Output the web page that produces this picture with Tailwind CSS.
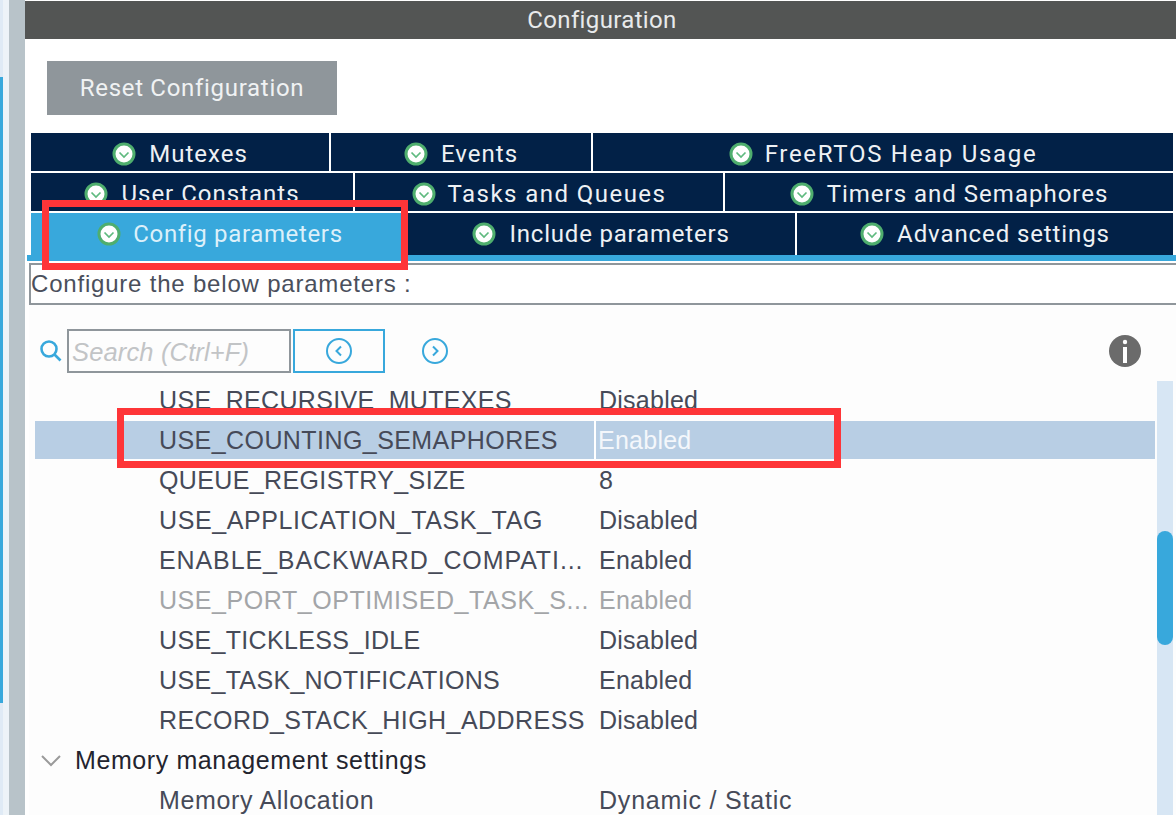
<!DOCTYPE html>
<html lang="en">
<head>
  <meta charset="UTF-8">
  <title>Configuration</title>
  <script src="https://cdn.jsdelivr.net/npm/@tailwindcss/browser@4"></script>
</head>
<body class="bg-white w-[1176px] h-[815px] overflow-hidden relative font-['Liberation_Sans',sans-serif]">
  <div class="flex h-[815px]">
    <!-- left edge of the window behind the panel -->
    <div class="w-[3px] flex flex-col bg-[#dfeaf5]">
      <div class="h-[77px]"></div>
      <div class="h-[626px] bg-[#38a8dc]"></div>
    </div>
    <div class="w-[6px] bg-[#edf3f8]"></div>
    <div class="w-4 bg-[#b8c3c9]"></div>

    <main class="w-[1151px] flex flex-col">
      <div class="mt-px h-[38px] bg-[#535554] flex items-center justify-center text-[24px] tracking-[0.35px] text-[#e8eaeb] font-['Roboto',sans-serif]"><span class="ml-[3px]">Configuration</span></div>
      <div class="ml-[22px] mt-[22px] w-[290px] h-[54px] bg-[#8f969b] flex items-center justify-center text-[24px] tracking-[0.7px] text-[#f0f2f3] font-['Roboto',sans-serif]">Reset Configuration</div>

      <!-- tabs -->
      <div class="ml-[6px] mt-[18px] w-[1142px] flex flex-col gap-[2px] text-[24px] tracking-[1px] text-[#eef1f4] font-['Roboto',sans-serif]">
        <div class="flex gap-[2px] h-[38px]">
          <div class="w-[298px] pt-[3px] bg-[#022147] flex items-center justify-center gap-[13px]"><svg class="w-6 h-6" viewBox="0 0 24 24"><circle cx="12" cy="12" r="10" fill="#fff" stroke="#4fae6e" stroke-width="3"/><path d="M7.5 10.5l4.5 4.5 4.5-4.5" fill="none" stroke="#5fba7f" stroke-width="1.7"/></svg>Mutexes</div>
          <div class="w-[260px] pt-[3px] bg-[#022147] flex items-center justify-center gap-[13px]"><svg class="w-6 h-6" viewBox="0 0 24 24"><circle cx="12" cy="12" r="10" fill="#fff" stroke="#4fae6e" stroke-width="3"/><path d="M7.5 10.5l4.5 4.5 4.5-4.5" fill="none" stroke="#5fba7f" stroke-width="1.7"/></svg>Events</div>
          <div class="w-[580px] pt-[3px] bg-[#022147] flex items-center justify-center gap-[12px] tracking-[1.7px]"><svg class="w-6 h-6" viewBox="0 0 24 24"><circle cx="12" cy="12" r="10" fill="#fff" stroke="#4fae6e" stroke-width="3"/><path d="M7.5 10.5l4.5 4.5 4.5-4.5" fill="none" stroke="#5fba7f" stroke-width="1.7"/></svg>FreeRTOS Heap Usage</div>
        </div>
        <div class="flex gap-[2px] h-[38px]">
          <div class="w-[322px] pt-[3px] bg-[#022147] flex items-center justify-center gap-[13px]"><svg class="w-6 h-6" viewBox="0 0 24 24"><circle cx="12" cy="12" r="10" fill="#fff" stroke="#4fae6e" stroke-width="3"/><path d="M7.5 10.5l4.5 4.5 4.5-4.5" fill="none" stroke="#5fba7f" stroke-width="1.7"/></svg>User Constants</div>
          <div class="w-[368px] pt-[3px] bg-[#022147] flex items-center justify-center gap-[12px] tracking-[1.45px]"><svg class="w-6 h-6" viewBox="0 0 24 24"><circle cx="12" cy="12" r="10" fill="#fff" stroke="#4fae6e" stroke-width="3"/><path d="M7.5 10.5l4.5 4.5 4.5-4.5" fill="none" stroke="#5fba7f" stroke-width="1.7"/></svg>Tasks and Queues</div>
          <div class="w-[448px] pt-[3px] bg-[#022147] flex items-center justify-center gap-[13px]"><svg class="w-6 h-6" viewBox="0 0 24 24"><circle cx="12" cy="12" r="10" fill="#fff" stroke="#4fae6e" stroke-width="3"/><path d="M7.5 10.5l4.5 4.5 4.5-4.5" fill="none" stroke="#5fba7f" stroke-width="1.7"/></svg>Timers and Semaphores</div>
        </div>
        <div class="flex h-[42px]">
          <div class="w-[374px] h-[48px] bg-[#38a8dc] flex items-center justify-center gap-[12px] pb-[6px] pl-[4px] tracking-[0.65px] text-[#dcf0fa] relative"><svg class="w-6 h-6" viewBox="0 0 24 24"><circle cx="12" cy="12" r="10" fill="#fff" stroke="#4fae6e" stroke-width="3"/><path d="M7.5 10.5l4.5 4.5 4.5-4.5" fill="none" stroke="#5fba7f" stroke-width="1.7"/></svg>Config parameters</div>
          <div class="w-[390px] pl-[2px] bg-[#022147] flex items-center justify-center gap-[13px] tracking-[0.8px]"><svg class="w-6 h-6" viewBox="0 0 24 24"><circle cx="12" cy="12" r="10" fill="#fff" stroke="#4fae6e" stroke-width="3"/><path d="M7.5 10.5l4.5 4.5 4.5-4.5" fill="none" stroke="#5fba7f" stroke-width="1.7"/></svg>Include parameters</div>
          <div class="w-[376px] ml-[2px] bg-[#022147] flex items-center justify-center gap-[13px] tracking-[0.9px]"><svg class="w-6 h-6" viewBox="0 0 24 24"><circle cx="12" cy="12" r="10" fill="#fff" stroke="#4fae6e" stroke-width="3"/><path d="M7.5 10.5l4.5 4.5 4.5-4.5" fill="none" stroke="#5fba7f" stroke-width="1.7"/></svg>Advanced settings</div>
        </div>
      </div>
      <div class="ml-[2px] h-[6px] bg-[#38a8dc]"></div>

      <!-- panel below the tabs -->
      <div class="ml-[4px] mt-[2px] flex-1 bg-[#fdfdfd] flex flex-col min-h-0">
        <div class="h-[42px] border-y-2 border-l-2 border-[#8f969b] bg-white flex items-center text-[24px] tracking-[0.8px] text-[#4a4f5c]">Configure the below parameters :</div>

        <div class="h-[44px] mt-[24px] flex items-center relative">
          <svg class="ml-[10px] w-6 h-6" viewBox="0 0 24 24" fill="none" stroke="#38a8dc" stroke-width="2.6"><circle cx="10" cy="10" r="7.5"/><path d="M15.5 15.5l6 6"/></svg>
          <div class="ml-[4px] w-[224px] h-[44px] border-2 border-[#8f969b] flex items-center pl-[3px] pt-[3px] text-[25.5px] italic tracking-[0.15px] text-[#c2c4c6]">Search (Ctrl+F)</div>
          <div class="ml-[2px] w-[92px] h-[44px] border-2 border-[#38a8dc] flex items-center justify-center">
            <svg class="w-7 h-7" viewBox="0 0 28 28" fill="none" stroke="#38a8dc" stroke-width="2"><circle cx="14" cy="14" r="12"/><path d="M16 9.5L11.5 14l4.5 4.5"/></svg>
          </div>
          <svg class="ml-[36px] w-7 h-7" viewBox="0 0 28 28" fill="none" stroke="#38a8dc" stroke-width="2"><circle cx="14" cy="14" r="12"/><path d="M12 9.5l4.5 4.5-4.5 4.5"/></svg>
          <svg class="absolute left-[1080px] top-[6px] w-8 h-8" viewBox="0 0 32 32"><circle cx="16" cy="16" r="16" fill="#6b6b6b"/><circle cx="16" cy="7" r="2.2" fill="#fff"/><path d="M14 12h4v16h-4z" fill="#fff"/></svg>
        </div>

        <!-- parameter list and its scrollbar -->
        <div class="mt-[7px] flex-1 flex min-h-0 overflow-hidden text-[25px]">
          <div class="ml-[6px] w-[1120px] flex flex-col text-[#464a58] tracking-[0.25px]">
            <div class="h-10 pt-[2px] shrink-0 flex items-center"><span class="ml-[124px] w-[437px] whitespace-nowrap tracking-[0.33px]">USE_RECURSIVE_MUTEXES</span><span class="pl-[3px]">Disabled</span></div>
            <div class="h-[38px] shrink-0 my-px bg-[#b8cee4] flex items-center"><span class="ml-[124px] w-[437px] h-[38px] pt-[2px] flex items-center border-r-2 border-white whitespace-nowrap tracking-[0.43px]">USE_COUNTING_SEMAPHORES</span><span class="pl-[2px] pt-[2px] text-[#f4f7fb]">Enabled</span></div>
            <div class="h-10 pt-[2px] shrink-0 flex items-center"><span class="ml-[124px] w-[437px] whitespace-nowrap tracking-[0.37px]">QUEUE_REGISTRY_SIZE</span><span class="pl-[3px]">8</span></div>
            <div class="h-10 pt-[2px] shrink-0 flex items-center"><span class="ml-[124px] w-[437px] whitespace-nowrap tracking-[0.6px]">USE_APPLICATION_TASK_TAG</span><span class="pl-[3px]">Disabled</span></div>
            <div class="h-10 pt-[2px] shrink-0 flex items-center"><span class="ml-[124px] w-[437px] whitespace-nowrap tracking-[0.9px]">ENABLE_BACKWARD_COMPATI...</span><span class="pl-[3px]">Enabled</span></div>
            <div class="h-10 pt-[2px] shrink-0 flex items-center text-[#a3a5a8]"><span class="ml-[124px] w-[437px] whitespace-nowrap tracking-[0.55px]">USE_PORT_OPTIMISED_TASK_S...</span><span class="pl-[3px]">Enabled</span></div>
            <div class="h-10 pt-[2px] shrink-0 flex items-center"><span class="ml-[124px] w-[437px] whitespace-nowrap tracking-[0.35px]">USE_TICKLESS_IDLE</span><span class="pl-[3px]">Disabled</span></div>
            <div class="h-10 pt-[2px] shrink-0 flex items-center"><span class="ml-[124px] w-[437px] whitespace-nowrap tracking-[0.33px]">USE_TASK_NOTIFICATIONS</span><span class="pl-[3px]">Enabled</span></div>
            <div class="h-10 pt-[2px] shrink-0 flex items-center"><span class="ml-[124px] w-[437px] whitespace-nowrap tracking-[0.44px]">RECORD_STACK_HIGH_ADDRESS</span><span class="pl-[3px]">Disabled</span></div>
            <div class="h-10 pt-[2px] shrink-0 flex items-center text-[#23242e]">
              <svg class="ml-[6px] w-5 h-3" viewBox="0 0 20 12" fill="none" stroke="#9a9a9a" stroke-width="2"><path d="M1 1l9 9 9-9"/></svg>
              <span class="ml-[14px] whitespace-nowrap tracking-[0.6px]">Memory management settings</span>
            </div>
            <div class="h-10 pt-[2px] shrink-0 flex items-center"><span class="ml-[124px] w-[437px] whitespace-nowrap tracking-[0.65px]">Memory Allocation</span><span class="pl-[3px] tracking-[0.8px]">Dynamic / Static</span></div>
          </div>
          <div class="ml-[2px] mt-px w-4 h-[434px] bg-[#d7e6f4] relative">
            <div class="absolute top-[150px] w-4 h-[114px] rounded-lg bg-[#38a8dc]"></div>
          </div>
        </div>
      </div>
    </main>
  </div>

  <!-- red annotation boxes drawn over the screenshot -->
  <div class="absolute left-[42px] top-[200px] w-[366px] h-[70px] border-[7px] border-[#fe3538]"></div>
  <div class="absolute left-[117px] top-[408px] w-[724px] h-[60px] border-[7px] border-[#fe3538]"></div>
</body>
</html>
